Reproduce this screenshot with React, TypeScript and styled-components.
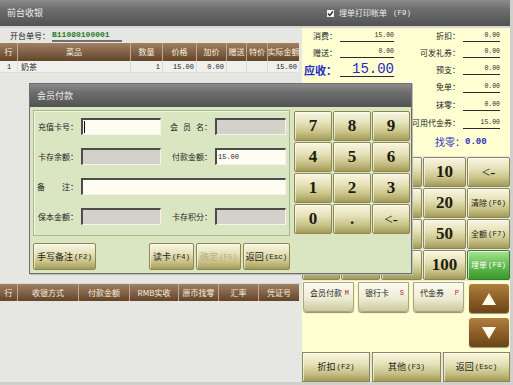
import React from 'react';
import styled, { createGlobalStyle, css } from 'styled-components';

const CJK = `"Noto Sans CJK SC", "Liberation Sans", sans-serif`;
const MONO = `"Liberation Mono", "Noto Sans CJK SC", monospace`;
const SERIF = `"Liberation Serif", "Noto Sans CJK SC", serif`;

const GlobalStyle = createGlobalStyle`
    html, body {
        margin: 0;
        padding: 0;
        background: #e6e6e3;
    }
    * {
        box-sizing: border-box;
    }
`;

const khaki = css`
    background: linear-gradient(#f8f6e4 0%, #e6e2b8 38%, #c8c288 72%, #a29a58 100%);
    border: 1px solid #8e8850;
    box-shadow: inset 1px 1px 0 rgba(255, 255, 255, 0.6);
`;

const darkBar = css`
    background: linear-gradient(#8c8c8c 0%, #6e6e6e 35%, #525252 100%);
    color: #ececec;
`;

const orderCols = [
    { title: '行', w: 17 },
    { title: '菜品', w: 113 },
    { title: '数量', w: 32 },
    { title: '价格', w: 34 },
    { title: '加价', w: 30 },
    { title: '赠送', w: 20 },
    { title: '特价', w: 21 },
    { title: '实际金额', w: 32 },
];

const payCols = [
    { title: '行', w: 17 },
    { title: '收银方式', w: 61 },
    { title: '付款金额', w: 51 },
    { title: 'RMB实收', w: 49 },
    { title: '原币找零', w: 40 },
    { title: '汇率', w: 40 },
    { title: '凭证号', w: 41 },
];

const orderRow = [
    { text: '1', align: 'center' },
    { text: '奶茶', align: 'left' },
    { text: '1', align: 'right' },
    { text: '15.00', align: 'right' },
    { text: '0.00', align: 'right' },
    { text: '', align: 'right' },
    { text: '', align: 'right' },
    { text: '15.00', align: 'right' },
];

// the first three columns sit under the member dialog, so they carry no label here
const mainKeys = [
    ['', '', '', '10', '<-'],
    ['', '', '', '20', '清除|(F6)'],
    ['', '', '', '50', '全额|(F7)'],
    ['', '', '', '100', '埋单|(F8)'],
];

const dialogKeys = ['7', '8', '9', '4', '5', '6', '1', '2', '3', '0', '.', '<-'];

const cols = (list: { w: number }[]) => list.map((c) => `${c.w}px`).join(' ');

const App = (): JSX.Element => {
    return (
        <>
            <GlobalStyle />
            <Frame>
                <TitleBar>
                    <Title>前台收银</Title>
                    <PrintOption>
                        <CheckBox>
                            <svg width="7" height="7" viewBox="0 0 7 7">
                                <path d="M1 3.6 L2.8 5.4 L6 1.4" stroke="#222" strokeWidth="1.4" fill="none" />
                            </svg>
                        </CheckBox>
                        埋单打印帐单<Fn>(F9)</Fn>
                    </PrintOption>
                </TitleBar>

                <Body>
                    <LeftPane>
                        <OrderSection>
                            <OrderNoRow>
                                开台单号：
                                <OrderNo>B11080100001</OrderNo>
                            </OrderNoRow>
                            <TableHeader $cols={cols(orderCols)}>
                                {orderCols.map((c) => (
                                    <HeadCell key={c.title}>{c.title}</HeadCell>
                                ))}
                            </TableHeader>
                            <DataRow $cols={cols(orderCols)}>
                                {orderRow.map((c, i) => (
                                    <DataCell key={i} $align={c.align} $mono={i !== 1}>
                                        {c.text}
                                    </DataCell>
                                ))}
                            </DataRow>
                        </OrderSection>
                        <PaySection>
                            <TableHeader $cols={cols(payCols)} $short>
                                {payCols.map((c) => (
                                    <HeadCell key={c.title}>{c.title}</HeadCell>
                                ))}
                            </TableHeader>
                        </PaySection>
                    </LeftPane>

                    <RightPane>
                        <InfoPanel>
                            <InfoColumn>
                                <InfoItem $side="left" $h={16}>
                                    <InfoLabel>消费：</InfoLabel>
                                    <InfoValue>15.00</InfoValue>
                                </InfoItem>
                                <InfoItem $side="left" $h={17}>
                                    <InfoLabel>赠送：</InfoLabel>
                                    <InfoValue>0.00</InfoValue>
                                </InfoItem>
                                <InfoItem $side="left" $h={17}>
                                    <InfoLabel $big>应收：</InfoLabel>
                                    <InfoValue $big>15.00</InfoValue>
                                </InfoItem>
                            </InfoColumn>
                            <InfoColumn>
                                <InfoItem $side="right" $h={16}>
                                    <InfoLabel>折扣：</InfoLabel>
                                    <InfoValue>0.00</InfoValue>
                                </InfoItem>
                                <InfoItem $side="right" $h={17}>
                                    <InfoLabel>可发礼券：</InfoLabel>
                                    <InfoValue>0.00</InfoValue>
                                </InfoItem>
                                <InfoItem $side="right" $h={17}>
                                    <InfoLabel>预支：</InfoLabel>
                                    <InfoValue>0.00</InfoValue>
                                </InfoItem>
                                <InfoItem $side="right" $h={18}>
                                    <InfoLabel>免单：</InfoLabel>
                                    <InfoValue>0.00</InfoValue>
                                </InfoItem>
                                <InfoItem $side="right" $h={18}>
                                    <InfoLabel>抹零：</InfoLabel>
                                    <InfoValue>0.00</InfoValue>
                                </InfoItem>
                                <InfoItem $side="right" $h={18}>
                                    <InfoLabel>可用代金券：</InfoLabel>
                                    <InfoValue>15.00</InfoValue>
                                </InfoItem>
                                <Change>
                                    找零：<ChangeValue>0.00</ChangeValue>
                                </Change>
                            </InfoColumn>
                        </InfoPanel>

                        <MainKeypad>
                            {mainKeys.flat().map((k, i) => {
                                const [label, fn] = k.split('|');
                                return (
                                    <Key
                                        key={i}
                                        $small={!!fn}
                                        $thin={label === '<-'}
                                        $tone={label === '埋单' ? 'green' : 'khaki'}
                                    >
                                        {label}
                                        {fn && <Fn>{fn}</Fn>}
                                    </Key>
                                );
                            })}
                        </MainKeypad>

                        <MethodArea>
                            <Methods>
                                <MethodButton>
                                    会员付款<HotKey>M</HotKey>
                                </MethodButton>
                                <MethodButton>
                                    银行卡<HotKey>S</HotKey>
                                </MethodButton>
                                <MethodButton>
                                    代金券<HotKey>P</HotKey>
                                </MethodButton>
                            </Methods>
                            <Arrows>
                                <ArrowButton>
                                    <svg width="14" height="12" viewBox="0 0 14 12">
                                        <polygon points="7,0 14,12 0,12" fill="#fffbe8" />
                                    </svg>
                                </ArrowButton>
                                <ArrowButton>
                                    <svg width="14" height="12" viewBox="0 0 14 12">
                                        <polygon points="0,0 14,0 7,12" fill="#fffbe8" />
                                    </svg>
                                </ArrowButton>
                            </Arrows>
                        </MethodArea>

                        <BottomBar>
                            <BarButton $w={68}>
                                折扣<Fn>(F2)</Fn>
                            </BarButton>
                            <BarButton $w={69}>
                                其他<Fn>(F3)</Fn>
                            </BarButton>
                            <BarButton $w={67}>
                                返回<Fn>(Esc)</Fn>
                            </BarButton>
                        </BottomBar>
                    </RightPane>
                </Body>

                <Dialog>
                    <DialogTitle>会员付款</DialogTitle>
                    <DialogBody>
                        <FormArea>
                            <FormPanel>
                                <FormRow>
                                    <FieldLabel>充值卡号：</FieldLabel>
                                    <Field $tone="white">
                                        <Caret />
                                    </Field>
                                    <FieldLabel>
                                        <Spread $gap={5}>会员</Spread>名：
                                    </FieldLabel>
                                    <Field $tone="gray" />
                                </FormRow>
                                <FormRow>
                                    <FieldLabel>卡存余额：</FieldLabel>
                                    <Field $tone="gray" />
                                    <FieldLabel>付款金额：</FieldLabel>
                                    <Field $tone="white">15.00</Field>
                                </FormRow>
                                <FormRow>
                                    <FieldLabel>
                                        <Spread $gap={17}>备</Spread>注：
                                    </FieldLabel>
                                    <Field $tone="white" $wide />
                                </FormRow>
                                <FormRow>
                                    <FieldLabel>保本金额：</FieldLabel>
                                    <Field $tone="gray" />
                                    <FieldLabel>卡存积分：</FieldLabel>
                                    <Field $tone="gray" />
                                </FormRow>
                            </FormPanel>
                            <DialogButtons>
                                <DlgButton $w={63}>
                                    手写备注<Fn>(F2)</Fn>
                                </DlgButton>
                                <Spacer />
                                <DlgButton $w={45}>
                                    读卡<Fn>(F4)</Fn>
                                </DlgButton>
                                <DlgButton $w={45} $disabled>
                                    确定<Fn>(F5)</Fn>
                                </DlgButton>
                                <DlgButton $w={47}>
                                    返回<Fn>(Esc)</Fn>
                                </DlgButton>
                            </DialogButtons>
                        </FormArea>
                        <DialogKeypad>
                            {dialogKeys.map((k, i) => (
                                <Key key={i} $thin={k === '<-'}>
                                    {k}
                                </Key>
                            ))}
                        </DialogKeypad>
                    </DialogBody>
                </Dialog>
            </Frame>
        </>
    );
};

export default App;

const Frame = styled.div`
    position: relative;
    display: flex;
    flex-direction: column;
    width: 513px;
    height: 385px;
    overflow: hidden;
    background: #e6e6e3;
    border-right: 3px solid #cfcfcb;
    border-bottom: 3px solid #cfcfcb;
    font-family: ${CJK};
    font-size: 8px;
    line-height: 10px;
    color: #1c1c1c;
`;

const TitleBar = styled.div`
    ${darkBar};
    display: flex;
    align-items: center;
    flex: none;
    height: 28px;
    border-bottom: 2px solid #d6d6d2;
`;

const Title = styled.div`
    width: 302px;
    padding-left: 7px;
    font-size: 9px;
`;

const PrintOption = styled.div`
    display: flex;
    align-items: center;
    gap: 5px;
    padding-left: 25px;
    font-size: 8px;
`;

const CheckBox = styled.span`
    display: flex;
    align-items: center;
    justify-content: center;
    width: 7px;
    height: 7px;
    background: #f4f4f4;
`;

const Fn = styled.span`
    font-family: ${MONO};
    font-size: 7.5px;
    font-weight: 400;
    margin-left: 1px;
`;

const Body = styled.div`
    display: flex;
    flex: 1;
    min-height: 0;
`;

const LeftPane = styled.div`
    display: flex;
    flex-direction: column;
    width: 302px;
`;

const OrderSection = styled.div`
    height: 255px;
    flex: none;
`;

const OrderNoRow = styled.div`
    display: flex;
    align-items: center;
    height: 15px;
    padding-left: 10px;
    font-size: 8px;
`;

const OrderNo = styled.span`
    width: 70px;
    margin-left: 2px;
    border-bottom: 2px solid #707070;
    font-family: ${MONO};
    font-weight: 700;
    font-size: 8px;
    line-height: 10px;
    color: #1f7a1f;
`;

const TableHeader = styled.div<{ $cols: string; $short?: boolean }>`
    display: grid;
    grid-template-columns: ${(p) => p.$cols};
    height: ${(p) => (p.$short ? 17 : 18)}px;
    width: 299px;
    background: linear-gradient(#a08060 0%, #85654a 45%, #634529 100%);
`;

const HeadCell = styled.div`
    display: flex;
    align-items: center;
    justify-content: center;
    border-left: 1px solid #c4a888;
    color: #f6eedc;
    font-size: 8px;
    white-space: nowrap;
    overflow: hidden;

    &:first-child {
        border-left: none;
    }
`;

const DataRow = styled.div<{ $cols: string }>`
    display: grid;
    grid-template-columns: ${(p) => p.$cols};
    height: 12px;
    width: 299px;
    background: #f0f0ee;
    border-bottom: 1px solid #dcdcd8;
`;

const DataCell = styled.div<{ $align: string; $mono?: boolean }>`
    padding: 0 2px 0 3px;
    border-left: 1px solid #dcdcd8;
    text-align: ${(p) => p.$align};
    font-family: ${(p) => (p.$mono ? MONO : CJK)};
    font-size: ${(p) => (p.$mono ? '7px' : '8px')};
    line-height: 12px;
    white-space: nowrap;

    &:first-child {
        border-left: none;
    }
`;

const PaySection = styled.div`
    flex: 1;
    border-top: 1px solid #d8d8d4;
`;

const RightPane = styled.div`
    display: flex;
    flex-direction: column;
    width: 208px;
`;

const InfoPanel = styled.div`
    display: grid;
    grid-template-columns: 100px 108px;
    height: 128px;
    flex: none;
    background: #ffffd2;
`;

const InfoColumn = styled.div`
    display: flex;
    flex-direction: column;
`;

const InfoItem = styled.div<{ $side: 'left' | 'right'; $h: number }>`
    display: grid;
    grid-template-columns: ${(p) => (p.$side === 'left' ? '35px 54px' : '58px 37px')};
    column-gap: 3px;
    align-items: center;
    height: ${(p) => p.$h}px;
`;

const InfoLabel = styled.span<{ $big?: boolean }>`
    text-align: right;
    white-space: nowrap;
    font-size: ${(p) => (p.$big ? '11px' : '8px')};
    font-weight: ${(p) => (p.$big ? 700 : 400)};
    color: ${(p) => (p.$big ? '#1e2cc4' : '#1c1c1c')};
`;

const InfoValue = styled.span<{ $big?: boolean }>`
    height: ${(p) => (p.$big ? 15 : 11)}px;
    border-bottom: 1px solid #2a2a2a;
    text-align: right;
    font-family: ${MONO};
    font-size: ${(p) => (p.$big ? '14px' : '6.5px')};
    line-height: ${(p) => (p.$big ? 14 : 10)}px;
    color: ${(p) => (p.$big ? '#1e2cc4' : '#1c1c1c')};
`;

const Change = styled.div`
    display: flex;
    align-items: center;
    height: 19px;
    padding-left: 33px;
    font-size: 10px;
    color: #2a30c0;
`;

const ChangeValue = styled.span`
    font-family: ${MONO};
    font-size: 9px;
    font-weight: 700;
`;

const MainKeypad = styled.div`
    display: grid;
    grid-template-columns: 38px 39px 41px 43px 43px;
    grid-template-rows: repeat(4, 30px);
    gap: 1px;
    padding: 1px 0;
    flex: none;
    background: #e6e6e3;
`;

const Key = styled.div<{ $tone?: 'khaki' | 'green'; $small?: boolean; $thin?: boolean }>`
    ${khaki};
    display: flex;
    align-items: center;
    justify-content: center;
    border-radius: 2px;
    font-family: ${(p) => (p.$small ? CJK : SERIF)};
    font-size: ${(p) => (p.$small ? '8px' : p.$thin ? '15px' : '17px')};
    font-weight: ${(p) => (p.$small || p.$thin ? 400 : 700)};
    color: #1e1c10;

    ${(p) =>
        p.$tone === 'green' &&
        css`
            background: linear-gradient(#a8e494 0%, #6cc056 45%, #3a9a2c 100%);
            border-color: #3b7a2c;
            color: #ffffff;
        `}
`;

const MethodArea = styled.div`
    display: flex;
    height: 71px;
    flex: none;
    padding: 1px 1px 0 1px;
    background: #ffffd2;
`;

const Methods = styled.div`
    display: flex;
    align-items: flex-start;
    gap: 4px;
`;

const MethodButton = styled.div`
    display: flex;
    justify-content: space-between;
    width: 51px;
    height: 30px;
    padding: 5px 4px 0 6px;
    background: linear-gradient(#fcfbf0 0%, #eeecd4 55%, #cdc99e 100%);
    border: 1px solid #aaa67a;
    border-radius: 0 0 4px 4px;
    box-shadow: 0 1px 1px rgba(0, 0, 0, 0.45);
    font-size: 8px;
    white-space: nowrap;
`;

const HotKey = styled.span`
    font-family: ${MONO};
    font-size: 7px;
    color: #c02828;
`;

const Arrows = styled.div`
    display: flex;
    flex-direction: column;
    gap: 5px;
    margin-left: auto;
    padding-top: 2px;
`;

const ArrowButton = styled.div`
    display: flex;
    align-items: center;
    justify-content: center;
    width: 40px;
    height: 29px;
    border-radius: 3px;
    background: linear-gradient(#b08040 0%, #8e6028 50%, #6a4416 100%);
    box-shadow: 0 1px 1px rgba(0, 0, 0, 0.4);
`;

const BottomBar = styled.div`
    display: flex;
    gap: 2px;
    height: 30px;
    flex: none;
    background: #e6e6e3;
`;

const BarButton = styled.div<{ $w: number }>`
    ${khaki};
    display: flex;
    align-items: center;
    justify-content: center;
    width: ${(p) => p.$w}px;
    font-size: 9px;
`;

const Dialog = styled.div`
    position: absolute;
    left: 29px;
    top: 83px;
    display: flex;
    flex-direction: column;
    width: 383px;
    height: 191px;
    border: 1px solid #6e6e6e;
    background: #dae5c2;
    box-shadow: 1px 1px 0 #bdbdb8;
`;

const DialogTitle = styled.div`
    ${darkBar};
    display: flex;
    align-items: center;
    height: 23px;
    padding-left: 7px;
    font-size: 9px;
`;

const DialogBody = styled.div`
    display: flex;
    gap: 2px;
    padding: 3px 1px 0 3px;
`;

const FormArea = styled.div`
    display: flex;
    flex-direction: column;
    width: 259px;
    padding-right: 2px;
`;

const FormPanel = styled.div`
    display: flex;
    flex-direction: column;
    gap: 13px;
    height: 126px;
    padding-top: 7px;
    border: 1px solid #a9b78e;
    box-shadow: inset 1px 1px 0 #f2f6e6;
`;

const FormRow = styled.div`
    display: grid;
    grid-template-columns: 47px 80px 54px 71px;
    height: 17px;
`;

const FieldLabel = styled.div`
    display: flex;
    align-items: center;
    justify-content: flex-end;
    padding-right: 3px;
    font-size: 8px;
    white-space: nowrap;
`;

const Spread = styled.span<{ $gap: number }>`
    letter-spacing: ${(p) => p.$gap}px;
`;

const Field = styled.div<{ $tone: 'white' | 'gray'; $wide?: boolean }>`
    display: flex;
    align-items: center;
    padding-left: 1px;
    grid-column: ${(p) => (p.$wide ? 'span 3' : 'auto')};
    border: 1px solid;
    border-top-width: 2px;
    border-left-width: 2px;
    border-color: #4c4c4c #f4f4ee #f4f4ee #4c4c4c;
    background: ${(p) => (p.$tone === 'white' ? '#fffdf2' : '#d4d1ca')};
    font-family: ${MONO};
    font-size: 7px;
`;

const Caret = styled.span`
    width: 1px;
    height: 12px;
    background: #000000;
`;

const DialogButtons = styled.div`
    display: flex;
    gap: 2px;
    height: 27px;
    margin-top: 7px;
`;

const Spacer = styled.div`
    flex: 1;
`;

const DlgButton = styled.div<{ $w: number; $disabled?: boolean }>`
    ${khaki};
    display: flex;
    align-items: center;
    justify-content: center;
    width: ${(p) => p.$w}px;
    border-radius: 2px;
    font-size: 9px;
    white-space: nowrap;
    color: ${(p) => (p.$disabled ? '#b4ae8a' : '#1c1c1c')};
`;

const DialogKeypad = styled.div`
    display: grid;
    grid-template-columns: repeat(3, 38px);
    grid-template-rows: repeat(4, 30px);
    gap: 1px;
    margin-top: 1px;
`;
